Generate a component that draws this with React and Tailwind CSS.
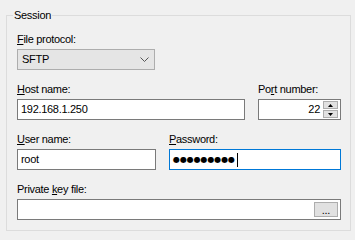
import React from "react";

const font = { fontFamily: '"Liberation Sans", Arial, sans-serif' };

function Label({ children }) {
  return <div className="h-[15px] leading-[15px] mb-[2px] whitespace-nowrap">{children}</div>;
}

function Edit({ className = "", children }) {
  return (
    <div className={`h-[21px] border border-[#7a7a7a] bg-white flex items-center pl-[3px] ${className}`}>
      {children}
    </div>
  );
}

export default function App() {
  return (
    <div
      className="w-[355px] h-[240px] bg-[#f0f0f0] text-black text-[11px] tracking-[-0.3px] pt-[8px] overflow-hidden"
      style={font}
    >
      <fieldset className="ml-[6px] mr-[4px] border border-[#dcdcdc] pl-[10px] pr-[9px] pt-[9px] pb-[10px] min-w-0">
        <legend className="ml-[-4px] px-px h-[15px] leading-[15px]">Session</legend>

        <Label>
          <u>F</u>ile protocol:
        </Label>
        <div className="w-[138px] h-[21px] border border-[#adadad] bg-[#e5e5e5] flex items-center justify-between pl-[4px] pr-[4px]">
          <span>SFTP</span>
          <svg width="9" height="5" viewBox="0 0 9 5" className="mr-[1px]">
            <path d="M0.5 0.5 L4.5 4.5 L8.5 0.5" fill="none" stroke="#555" strokeWidth="1" />
          </svg>
        </div>

        <div className="mt-[12px] flex gap-[13px]">
          <div className="w-[228px]">
            <Label>
              <u>H</u>ost name:
            </Label>
            <Edit>192.168.1.250</Edit>
          </div>
          <div className="flex-1">
            <Label>
              Po<u>r</u>t number:
            </Label>
            <Edit className="justify-end pr-[2px]">
              <span className="mr-[3px]">22</span>
              <div className="w-[15px] h-[17px] flex flex-col gap-px">
                <div className="flex-1 border border-[#adadad] bg-[#e1e1e1] flex items-center justify-center">
                  <svg width="5" height="3" viewBox="0 0 5 3">
                    <path d="M0 3 L2.5 0 L5 3 Z" fill="#000" />
                  </svg>
                </div>
                <div className="flex-1 border border-[#adadad] bg-[#e1e1e1] flex items-center justify-center">
                  <svg width="5" height="3" viewBox="0 0 5 3">
                    <path d="M0 0 L5 0 L2.5 3 Z" fill="#000" />
                  </svg>
                </div>
              </div>
            </Edit>
          </div>
        </div>

        <div className="mt-[12px] flex gap-[13px]">
          <div className="w-[139px]">
            <Label>
              <u>U</u>ser name:
            </Label>
            <Edit>root</Edit>
          </div>
          <div className="flex-1">
            <Label>
              <u>P</u>assword:
            </Label>
            <Edit className="border-[#0078d7]">
              <span className="text-[8px] tracking-[-0.1px] leading-none" style={{ fontFamily: '"DejaVu Sans", sans-serif' }}>
                ●●●●●●●●●
              </span>
              <span className="ml-[2px] w-px h-[14px] bg-black" />
            </Edit>
          </div>
        </div>

        <div className="mt-[12px]">
          <Label>
            Private <u>k</u>ey file:
          </Label>
          <Edit className="justify-end pr-[2px]">
            <div className="w-[24px] h-[15px] border border-[#adadad] bg-[#e1e1e1] flex items-end justify-center leading-[11px] text-[11px]">
              ...
            </div>
          </Edit>
        </div>
      </fieldset>
    </div>
  );
}
